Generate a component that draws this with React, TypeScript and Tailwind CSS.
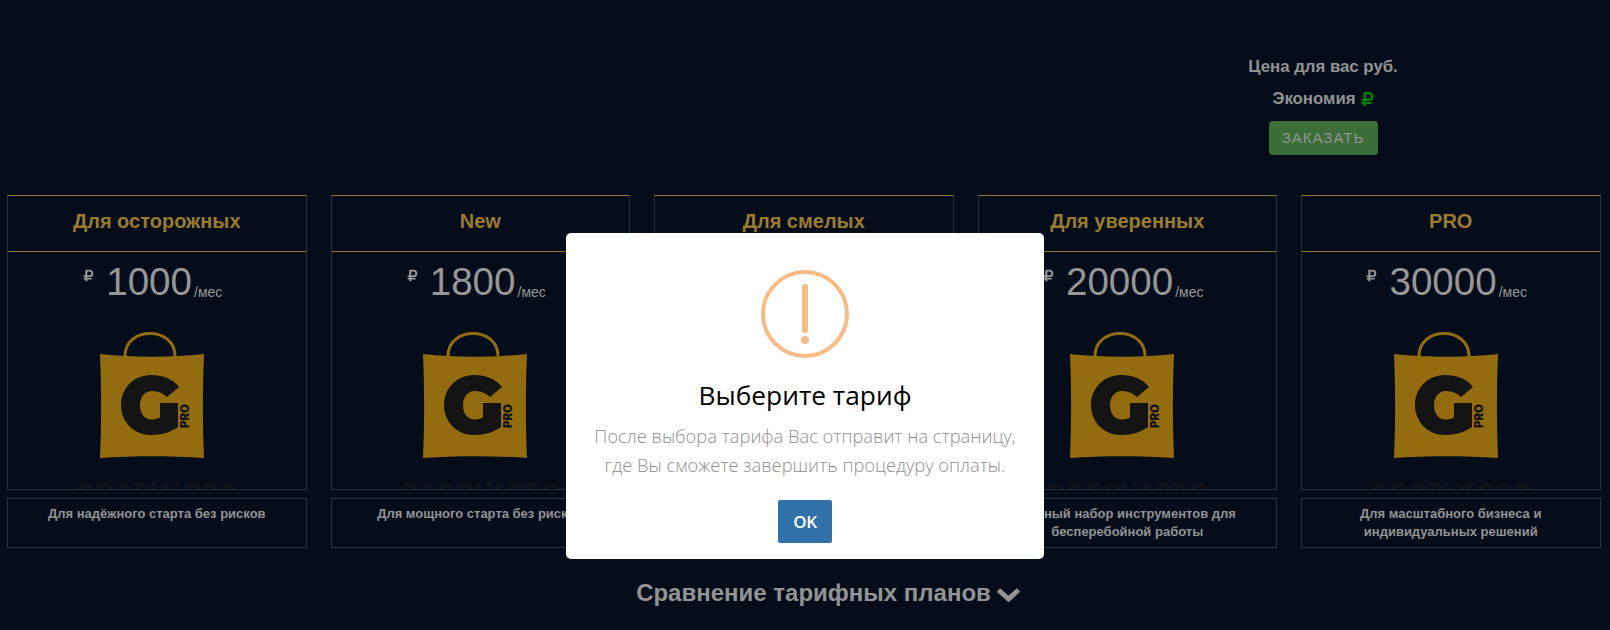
import React from "react";
import { FaRubleSign } from "react-icons/fa";

const plans = [
  { title: "Для осторожных", price: "1000", text: ["Для надёжного старта без рисков"] },
  { title: "New", price: "1800", text: ["Для мощного старта без рисков"] },
  { title: "Для смелых", price: "5000", text: ["Для смелых решений"] },
  { title: "Для уверенных", price: "20000", text: ["Полный набор инструментов для", "бесперебойной работы"] },
  { title: "PRO", price: "30000", text: ["Для масштабного бизнеса и", "индивидуальных решений"] },
];

const Bag = () => (
  <svg width="104" height="127" viewBox="0 0 104 127" className="block">
    <path d="M25 24 C25 -6 75 -6 75 24" fill="none" stroke="#946c10" strokeWidth="3" />
    <path d="M0 22 C34 25.5 70 25.5 104 22 C102.5 56 102.5 92 104 126 C70 123.5 34 123.5 0 126 C1.5 92 1.5 56 0 22 Z" fill="#946c10" />
    <path
      d="M79 55 C73 47 63 43 51 43 C33 43 21 57 21 73 C21 90 34 103 51 103 C62 103 71 100 78 95 V71 H60 V85.5 C57 87 54 87.5 51.5 87.5 C44 87.5 40 81 40 73 C40 65 45 59 52 59 C58 59 63 61 67 65 Z"
      fill="#141414"
    />
    <text
      transform="translate(89 96) rotate(-90)"
      fontFamily="Inter, sans-serif"
      fontWeight="900"
      fontSize="11.4"
      fill="#141414"
    >
      PRO
    </text>
  </svg>
);

const PlanCard = ({ title, price, text }: { title: string; price: string; text: string[] }) => (
  <div className="w-[299.5px]">
    <div className="h-[295px] overflow-hidden border border-[#2a3242] border-t-[#8f7433]">
      <div className="flex h-[56px] items-center justify-center border-b border-[#8f7433] pb-[6px] text-[20px] font-bold text-[#9a7b30]">
        {title}
      </div>
      <div className="flex h-[57px] items-end justify-center pr-[8px] text-[#979797]">
        <FaRubleSign className="mb-[27px] mr-[12px] h-[13px] w-[11px]" />
        <span className="mb-[1px] text-[38.6px] leading-[53px]">{price}</span>
        <span className="mb-[6px] ml-[2px] text-[14px]">/мес</span>
      </div>
      <div className="flex justify-center pr-[10px] pt-[23px]">
        <Bag />
      </div>
      <div className="mt-[18px] text-center font-['Inter',sans-serif] text-[25px] font-black leading-[30px] text-[#10121a]">
        GOOPLY PRO
      </div>
    </div>
    <div className="mt-[8px] flex h-[50px] flex-col border border-[#2a3242] pt-[6px] text-center text-[13px] font-bold leading-[18px] text-[#939393]">
      {text.map((line) => (
        <div key={line}>{line}</div>
      ))}
    </div>
  </div>
);

const App = () => {
  return (
    <div className="relative h-[630px] w-[1610px] overflow-hidden bg-[#050d1b] font-['Liberation_Sans',sans-serif]">
      <div className="flex h-[195px] justify-end pr-[187px] pt-[56px]">
        <div className="flex w-[200px] flex-col items-center text-[16.8px] font-bold text-[#939393]">
          <div className="leading-[22px]">Цена для вас руб.</div>
          <div className="mt-[10px] flex items-center gap-[5px] leading-[22px]">
            Экономия <FaRubleSign className="h-[16px] w-[13px] text-[#008000]" />
          </div>
          <button className="mt-[11px] h-[34px] w-[109px] rounded-[4px] bg-[#3c6e3a] text-[15px] font-normal tracking-[1px] text-[#939393]">
            ЗАКАЗАТЬ
          </button>
        </div>
      </div>
      <div className="flex gap-[24px] pl-[7px]">
        {plans.map((plan) => (
          <PlanCard key={plan.title} {...plan} />
        ))}
      </div>
      <div className="mt-[27px] flex items-center justify-center gap-[5px] pl-[47px] text-[24px] font-bold text-[#939393]">
        Сравнение тарифных планов
        <svg width="25" height="16" viewBox="0 0 25 16" className="mt-[2px]">
          <path d="M2.5 4 L12.5 13 L22.5 4" fill="none" stroke="#939393" strokeWidth="5" />
        </svg>
      </div>

      <div className="absolute left-[566px] top-[233px] flex h-[326px] w-[478px] flex-col items-center rounded-[5px] bg-white font-['Open_Sans',sans-serif]">
        <svg width="88" height="88" viewBox="0 0 88 88" className="mt-[37px]">
          <circle cx="44" cy="44" r="42" fill="none" stroke="#f8bb86" strokeWidth="4" />
          <rect x="41" y="14" width="6" height="49" rx="3" fill="#f8bb86" />
          <circle cx="44" cy="70" r="4" fill="#f8bb86" />
        </svg>
        <h2 className="mt-[17px] text-[26.3px] leading-[40px] text-black">Выберите тариф</h2>
        <p className="mt-[6px] text-center text-[18.3px] font-light leading-[29px] text-[#8f8f8f]">
          После выбора тарифа Вас отправит на страницу,
          <br />
          где Вы сможете завершить процедуру оплаты.
        </p>
        <button className="mt-[21px] h-[43px] w-[54px] rounded-[2px] bg-[#3071a9] text-[17px] font-semibold tracking-tight text-white">
          OK
        </button>
      </div>
    </div>
  );
};

export default App;
